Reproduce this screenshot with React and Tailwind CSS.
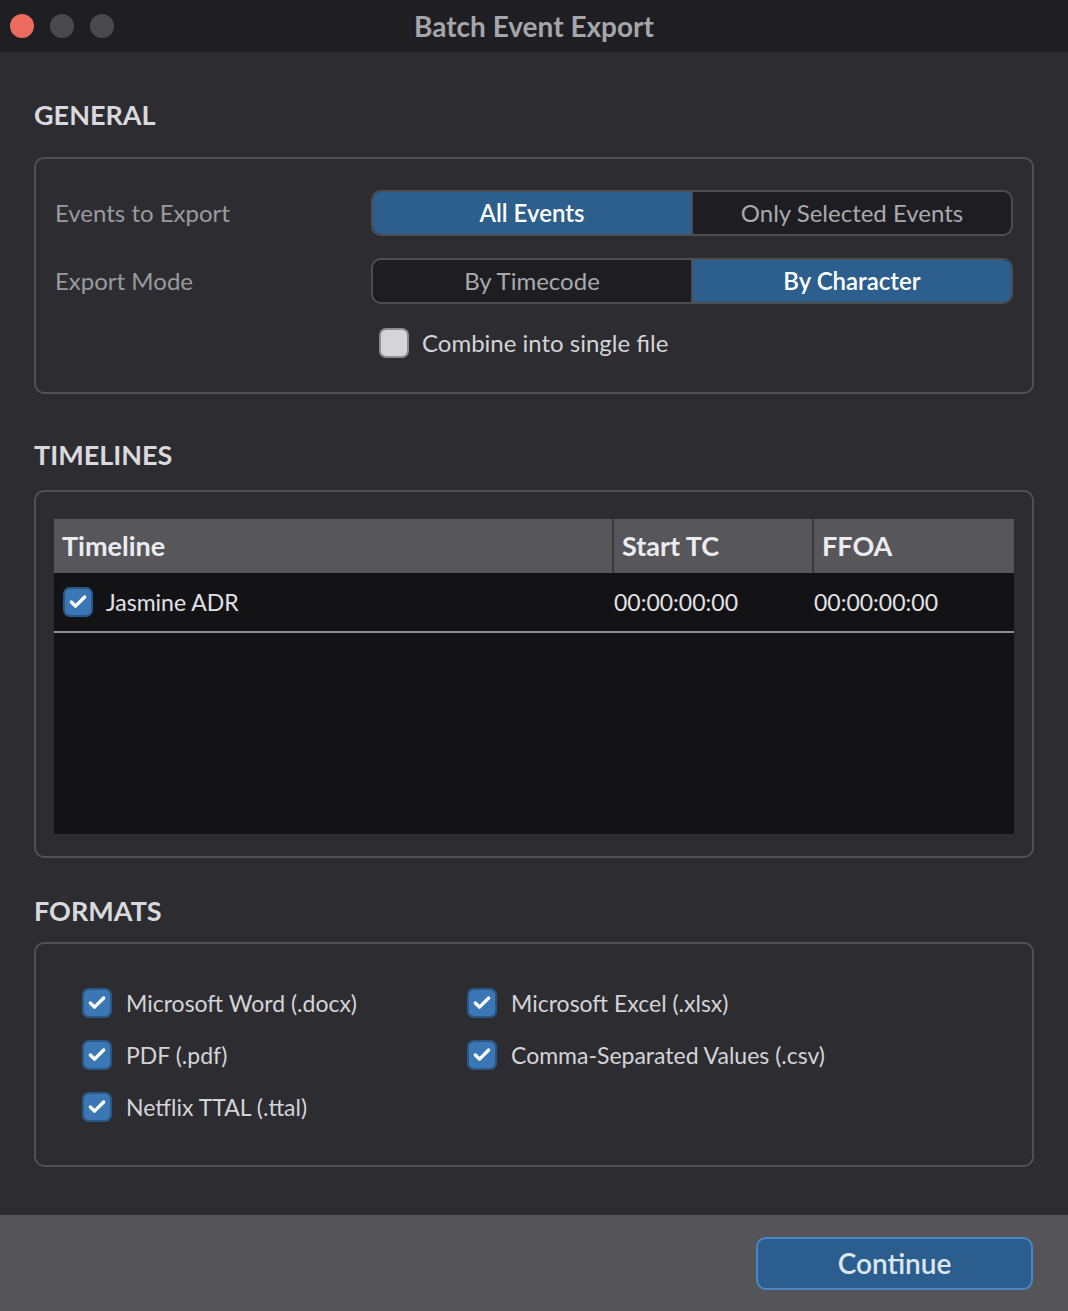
import { Check } from "lucide-react";

const font = { fontFamily: "Lato, 'Noto Sans', sans-serif" };

function Box({ checked }) {
  return checked ? (
    <span className="w-[30px] h-[30px] rounded-[7px] bg-[#3b77b5] border-2 border-[#295887] flex items-center justify-center shrink-0">
      <Check className="w-[20px] h-[20px] text-white" strokeWidth={4} />
    </span>
  ) : (
    <span className="w-[30px] h-[30px] rounded-[7px] bg-[#d6d6da] border-2 border-[#8c8c91] shrink-0" />
  );
}

function Segmented({ options, active }) {
  return (
    <div className="flex w-[642px] h-[46px] rounded-[10px] border-2 border-[#4d4d52] overflow-hidden bg-[#1e1e22]">
      {options.map((o, i) => (
        <div
          key={o}
          className={`flex-1 flex items-center justify-center text-[24px] ${
            i === active ? "bg-[#2c5e8e] text-white font-semibold" : "text-[#a9a9ae]"
          } ${i === 0 ? "border-r-2 border-[#4d4d52]" : ""}`}
        >
          {o}
        </div>
      ))}
    </div>
  );
}

function Heading({ children, className = "" }) {
  return <h2 className={`text-[27px] font-bold text-[#d9d9de] leading-none ml-[34px] ${className}`}>{children}</h2>;
}

const formats = [
  ["Microsoft Word (.docx)", "Microsoft Excel (.xlsx)"],
  ["PDF (.pdf)", "Comma-Separated Values (.csv)"],
  ["Netflix TTAL (.ttal)", null],
];

export default function App() {
  return (
    <div style={font} className="w-[1068px] h-[1311px] bg-[#2d2d31] flex flex-col overflow-hidden">
      <div className="h-[52px] bg-[#1f1f23] flex items-center relative shrink-0">
        <div className="flex gap-[16px] pl-[10px]">
          <span className="w-[24px] h-[24px] rounded-full bg-[#ec6a5e]" />
          <span className="w-[24px] h-[24px] rounded-full bg-[#4a4a4e]" />
          <span className="w-[24px] h-[24px] rounded-full bg-[#4a4a4e]" />
        </div>
        <div className="absolute inset-0 flex items-center justify-center text-[28px] font-bold text-[#a5a5aa]">
          Batch Event Export
        </div>
      </div>

      <Heading className="mt-[49px]">GENERAL</Heading>
      <div className="mx-[34px] mt-[29px] h-[237px] shrink-0 rounded-[10px] border-2 border-[#505055] pt-[31px] pr-[19px] pl-[19px]">
        <div className="flex items-center justify-between">
          <span className="text-[24px] text-[#9a9a9f]">Events to Export</span>
          <Segmented options={["All Events", "Only Selected Events"]} active={0} />
        </div>
        <div className="flex items-center justify-between mt-[22px]">
          <span className="text-[24px] text-[#9a9a9f]">Export Mode</span>
          <Segmented options={["By Timecode", "By Character"]} active={1} />
        </div>
        <div className="flex items-center gap-[13px] mt-[24px] ml-[324px] h-[30px]">
          <Box checked={false} />
          <span className="text-[24px] text-[#d4d4d8]">Combine into single file</span>
        </div>
      </div>

      <Heading className="mt-[47px]">TIMELINES</Heading>
      <div className="mx-[34px] mt-[22px] h-[368px] shrink-0 rounded-[10px] border-2 border-[#505055] pt-[27px] px-[18px]">
        <div className="bg-[#131316] h-[315px]">
          <div className="flex h-[54px] bg-[#56565b] text-[27px] font-bold text-[#ececf0]">
            <div className="w-[558px] flex items-center pl-[8px]">Timeline</div>
            <div className="w-[200px] flex items-center pl-[8px] border-l-2 border-[#3a3a3e]">Start TC</div>
            <div className="flex-1 flex items-center pl-[8px] border-l-2 border-[#3a3a3e]">FFOA</div>
          </div>
          <div className="flex h-[60px] items-center border-b-2 border-[#8e8e92] text-[23px] text-[#e2e2e6]">
            <div className="w-[558px] flex items-center gap-[13px] pl-[9px]">
              <Box checked />
              <span>Jasmine ADR</span>
            </div>
            <div className="w-[200px] pl-[2px]">00:00:00:00</div>
            <div className="flex-1 pl-[2px]">00:00:00:00</div>
          </div>
        </div>
      </div>

      <Heading className="mt-[39px]">FORMATS</Heading>
      <div className="mx-[34px] mt-[18px] h-[225px] shrink-0 rounded-[10px] border-2 border-[#505055] pt-[44px] pl-[46px]">
        <div className="flex flex-col gap-[22px]">
          {formats.map((row, i) => (
            <div key={i} className="flex h-[30px]">
              {row.map((f, j) =>
                f ? (
                  <div key={j} className={`flex items-center gap-[14px] ${j === 0 ? "w-[385px]" : ""}`}>
                    <Box checked />
                    <span className="text-[23px] text-[#d4d4d8]">{f}</span>
                  </div>
                ) : null
              )}
            </div>
          ))}
        </div>
      </div>

      <div className="mt-auto h-[96px] bg-[#555559] flex items-center justify-end pr-[35px] shrink-0">
        <button className="w-[277px] h-[53px] rounded-[10px] bg-[#2b5e8f] border-2 border-[#4a86c2] text-[28px] font-semibold text-[#dde6f0]">
          Continue
        </button>
      </div>
    </div>
  );
}
